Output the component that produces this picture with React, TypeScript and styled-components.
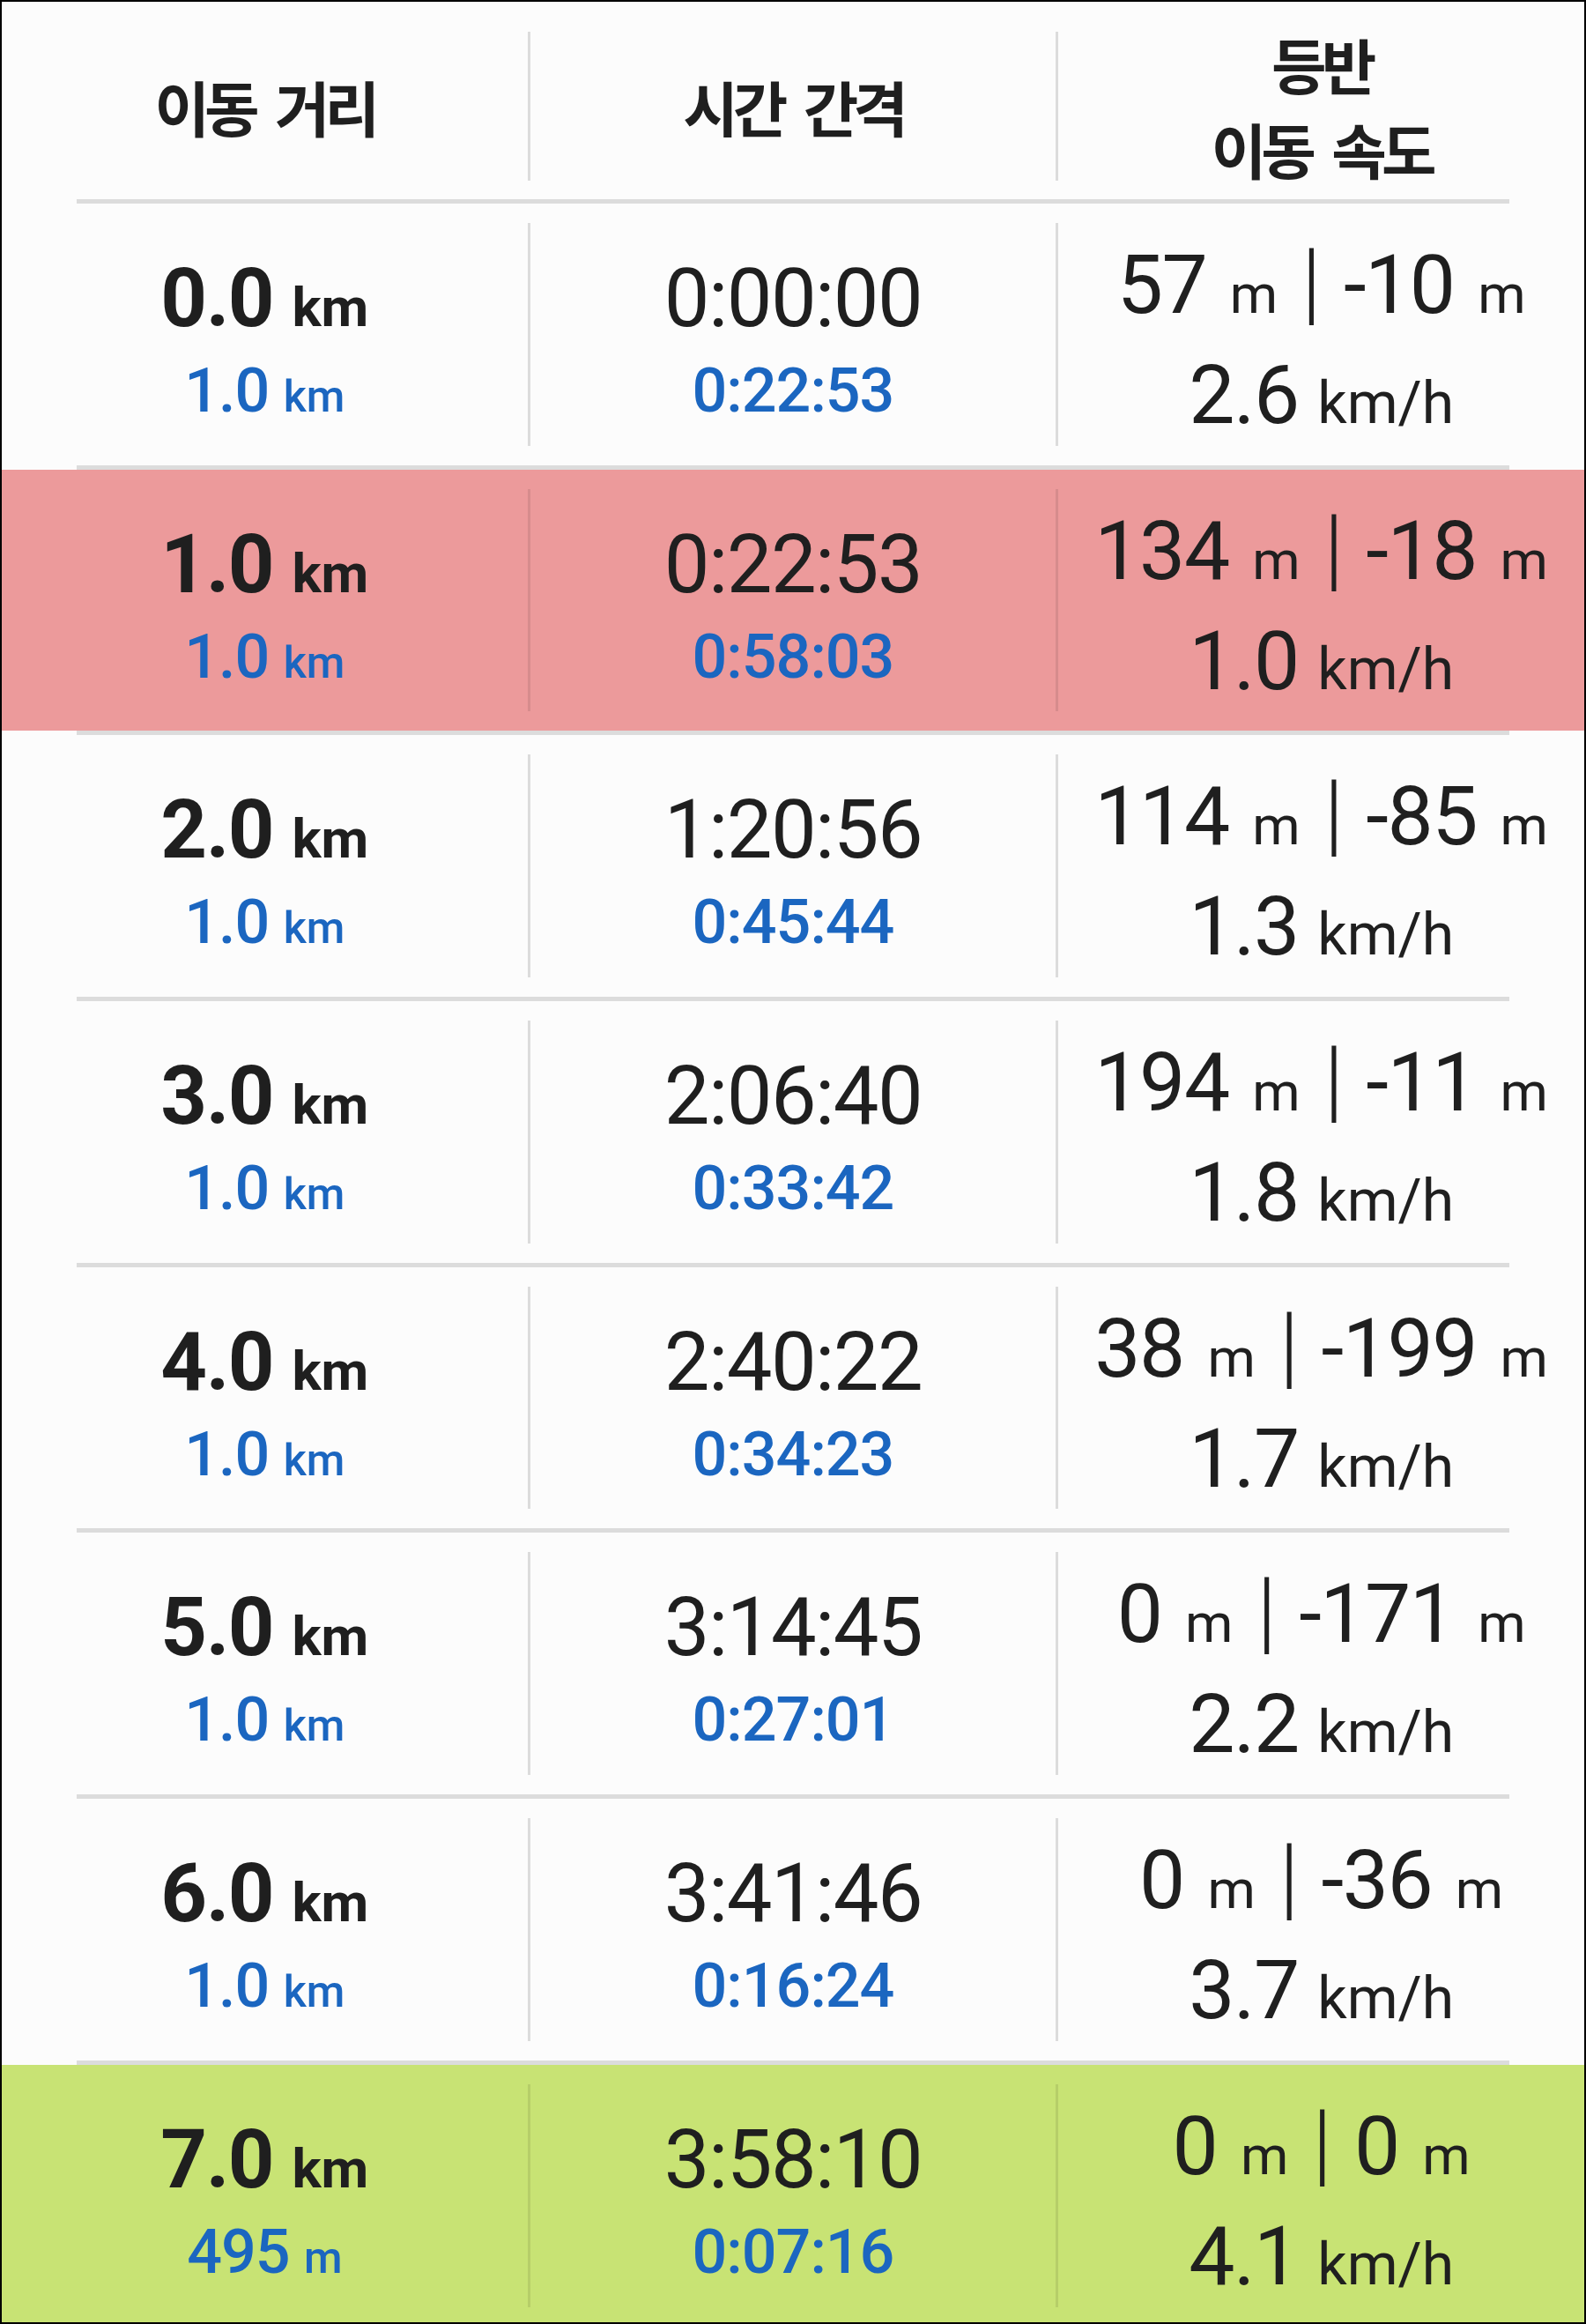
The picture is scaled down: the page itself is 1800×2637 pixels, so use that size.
import React from 'react';
import styled, { createGlobalStyle } from 'styled-components';

const GlobalStyle = createGlobalStyle`
  html, body {
    margin: 0;
    padding: 0;
    background: #ffffff;
  }
  * {
    box-sizing: border-box;
  }
`;

type Tone = 'plain' | 'alert' | 'finish';

const toneBackground: Record<Tone, string> = {
    plain: 'transparent',
    alert: '#ec9a9b',
    finish: '#c8e374',
};

const Frame = styled.div`
    width: 1800px;
    height: 2637px;
    border: 2px solid #000000;
    background: #fcfcfc;
    overflow: hidden;
    font-family: Roboto, "Noto Sans", sans-serif;
    color: #1f1f1f;
`;

const Header = styled.div`
    display: grid;
    grid-template-columns: 1fr 3px 1fr 3px 1fr;
    height: 224px;
`;

const HeaderCell = styled.div`
    display: flex;
    flex-direction: column;
    align-items: center;
    justify-content: center;
    padding-top: 14px;
    font-family: "Noto Sans CJK KR", "Noto Sans", sans-serif;
    font-weight: 700;
    font-size: 68px;
    letter-spacing: -6px;
    word-spacing: 14px;
    line-height: 96px;
    color: #1f1f1f;
    white-space: nowrap;
`;

const HeaderDivider = styled.div`
    margin: 34px 0 21px;
    background: #dcdcdc;
`;

const Separator = styled.div`
    height: 5px;
    margin: 0 85px;
    background: #dcdcdc;
`;

const Row = styled.div<{ $tone: Tone }>`
    display: grid;
    grid-template-columns: 1fr 3px 1fr 3px 1fr;
    height: 296.7px;
    background: ${({ $tone }) => toneBackground[$tone]};
`;

const RowDivider = styled.div<{ $tone: Tone }>`
    margin: 22px 0;
    background: ${({ $tone }) => ($tone === 'plain' ? '#dcdcdc' : 'rgba(0, 0, 0, 0.09)')};
`;

const StackCell = styled.div`
    display: flex;
    flex-direction: column;
    align-items: center;
    padding-top: 55px;
    white-space: nowrap;
`;

const ClimbCell = styled(StackCell)`
    padding-top: 30px;
`;

const MainLine = styled.div<{ $bold?: boolean }>`
    font-size: 92px;
    line-height: 106px;
    letter-spacing: -1.5px;
    font-weight: ${({ $bold }) => ($bold ? 700 : 400)};
`;

const SubLine = styled.div`
    margin-top: 3px;
    font-size: 70px;
    line-height: 96px;
    letter-spacing: -1px;
    font-weight: 500;
    color: #1b66c0;
`;

const ClimbLine = styled.div<{ $spread?: boolean }>`
    font-size: 93px;
    line-height: 125px;
    letter-spacing: -1.5px;
    word-spacing: ${({ $spread }) => ($spread ? '5px' : '0')};
    font-weight: 400;
`;

const Unit = styled.span<{ $size: number }>`
    font-size: ${({ $size }) => $size}px;
    line-height: 1;
    letter-spacing: 0;
`;

const Bar = styled.span`
    font-size: 104px;
    font-weight: 300;
    line-height: 1;
`;

interface ISplit {
    dist: string;
    seg: string;
    segUnit: string;
    time: string;
    lap: string;
    up: string;
    down: string;
    speed: string;
    tone: Tone;
}

const splits: ISplit[] = [
    { dist: '0.0', seg: '1.0', segUnit: 'km', time: '0:00:00', lap: '0:22:53', up: '57', down: '-10', speed: '2.6', tone: 'plain' },
    { dist: '1.0', seg: '1.0', segUnit: 'km', time: '0:22:53', lap: '0:58:03', up: '134', down: '-18', speed: '1.0', tone: 'alert' },
    { dist: '2.0', seg: '1.0', segUnit: 'km', time: '1:20:56', lap: '0:45:44', up: '114', down: '-85', speed: '1.3', tone: 'plain' },
    { dist: '3.0', seg: '1.0', segUnit: 'km', time: '2:06:40', lap: '0:33:42', up: '194', down: '-11', speed: '1.8', tone: 'plain' },
    { dist: '4.0', seg: '1.0', segUnit: 'km', time: '2:40:22', lap: '0:34:23', up: '38', down: '-199', speed: '1.7', tone: 'plain' },
    { dist: '5.0', seg: '1.0', segUnit: 'km', time: '3:14:45', lap: '0:27:01', up: '0', down: '-171', speed: '2.2', tone: 'plain' },
    { dist: '6.0', seg: '1.0', segUnit: 'km', time: '3:41:46', lap: '0:16:24', up: '0', down: '-36', speed: '3.7', tone: 'plain' },
    { dist: '7.0', seg: '495', segUnit: 'm', time: '3:58:10', lap: '0:07:16', up: '0', down: '0', speed: '4.1', tone: 'finish' },
];

const SplitRow: React.FC<{ split: ISplit }> = ({ split }) => (
    <Row $tone={split.tone}>
        <StackCell>
            <MainLine $bold>
                {split.dist} <Unit $size={62}>km</Unit>
            </MainLine>
            <SubLine>
                {split.seg} <Unit $size={50}>{split.segUnit}</Unit>
            </SubLine>
        </StackCell>
        <RowDivider $tone={split.tone} />
        <StackCell>
            <MainLine>{split.time}</MainLine>
            <SubLine>{split.lap}</SubLine>
        </StackCell>
        <RowDivider $tone={split.tone} />
        <ClimbCell>
            <ClimbLine $spread>
                {split.up} <Unit $size={62}>m</Unit> <Bar>|</Bar> {split.down} <Unit $size={62}>m</Unit>
            </ClimbLine>
            <ClimbLine>
                {split.speed} <Unit $size={66}>km/h</Unit>
            </ClimbLine>
        </ClimbCell>
    </Row>
);

const App: React.FC = () => (
    <>
        <GlobalStyle />
        <Frame>
            <Header>
                <HeaderCell>이동 거리</HeaderCell>
                <HeaderDivider />
                <HeaderCell>시간 간격</HeaderCell>
                <HeaderDivider />
                <HeaderCell>
                    <span>등반</span>
                    <span>이동 속도</span>
                </HeaderCell>
            </Header>
            {splits.map((split) => (
                <React.Fragment key={split.dist}>
                    <Separator />
                    <SplitRow split={split} />
                </React.Fragment>
            ))}
        </Frame>
    </>
);

export default App;
